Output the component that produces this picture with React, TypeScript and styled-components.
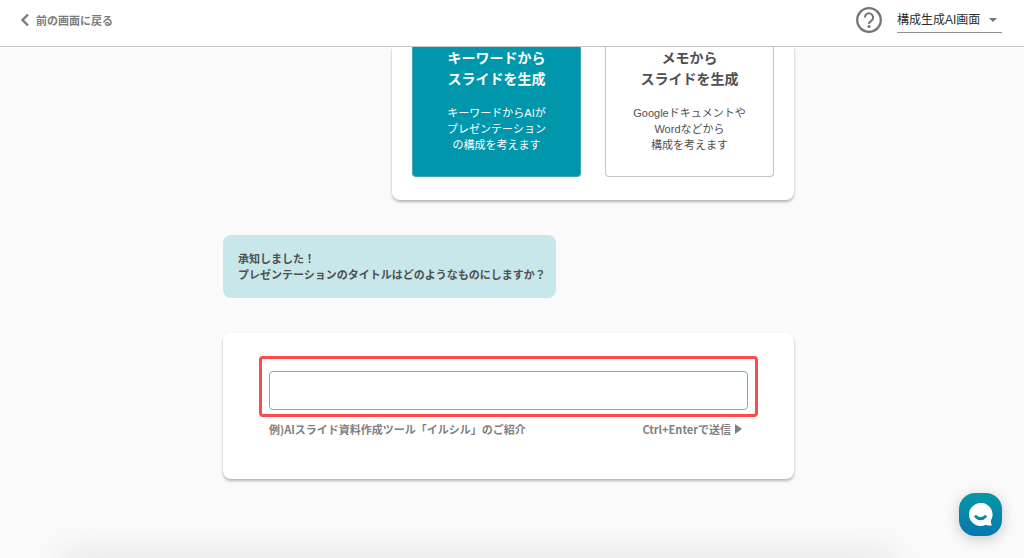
import React from "react";
import styled, { createGlobalStyle } from "styled-components";

const GlobalStyle = createGlobalStyle`
  *, *::before, *::after { box-sizing: border-box; }
  body {
    margin: 0;
    background: #fafafa;
    color: #505050;
    font-family: "Liberation Sans", "Noto Sans CJK JP", sans-serif;
  }
  button, input, select { font: inherit; color: inherit; }
`;

const Page = styled.div`
  display: flex;
  flex-direction: column;
  min-height: 100vh;
  overflow: hidden;
`;

const Header = styled.header`
  display: flex;
  align-items: center;
  justify-content: space-between;
  height: 47px;
  padding: 0 22px 6px 20px;
  background: #fff;
  border-bottom: 1px solid #c8c8c8;
`;

const BackButton = styled.button`
  display: flex;
  align-items: center;
  gap: 6px;
  padding: 0;
  border: 0;
  background: none;
  color: #7b7b7b;
  font-family: "Noto Sans CJK JP", sans-serif;
  font-size: 11px;
  font-weight: 700;
  line-height: 16px;
`;

const HeaderTools = styled.div`
  display: flex;
  align-items: center;
  gap: 14px;
`;

const HelpButton = styled.button`
  display: flex;
  padding: 0;
  border: 0;
  background: none;
  color: #757575;
`;

const SelectBox = styled.div`
  display: flex;
  align-items: center;
  width: 105px;
  border-bottom: 1px solid #919191;
`;

const ScreenSelect = styled.select`
  flex: 1;
  min-width: 0;
  height: 25px;
  padding: 0;
  border: 0;
  background: none;
  appearance: none;
  color: #2b2b2b;
  font-size: 12px;
`;

const SelectArrow = styled.svg`
  flex: none;
  margin-right: 5px;
  pointer-events: none;
`;

const Main = styled.main`
  display: flex;
  flex-direction: column;
  flex: 1;
  width: 100%;
  max-width: 578px;
  margin: 0 auto;
  padding: 0 7px 78px 0;
`;

const Card = styled.section`
  background: #fff;
  border-radius: 8px;
  box-shadow: 0 2px 3px rgba(0, 0, 0, 0.28);
`;

const OptionsCard = styled(Card)`
  display: flex;
  gap: 24px;
  align-self: flex-end;
  padding: 0 20px 23px;
  border-radius: 0 0 8px 8px;
`;

const Option = styled.button<{ $selected?: boolean }>`
  display: flex;
  flex-direction: column;
  gap: 15px;
  align-items: center;
  width: 169px;
  padding: 1px 0 23px;
  border: 1px solid ${(p) => (p.$selected ? "#4aa3b3" : "#c4c4c4")};
  border-top: 0;
  border-radius: 0 0 4px 4px;
  background: ${(p) => (p.$selected ? "#0097ad" : "#fff")};
  color: ${(p) => (p.$selected ? "#fff" : "#505050")};
`;

const OptionTitle = styled.span`
  font-size: 14px;
  font-weight: 700;
  line-height: 21px;
`;

const OptionText = styled.span`
  font-size: 11px;
  line-height: 16px;
`;

const Bubble = styled.p`
  align-self: flex-start;
  margin: 35px 0;
  padding: 16px 10px 15px 15px;
  border-radius: 8px;
  background: #c8e7ea;
  font-size: 11px;
  font-weight: 700;
  line-height: 16px;
`;

const TitleCard = styled(Card)`
  padding: 23px 36px 42px;
`;

const FieldFrame = styled.div`
  padding: 12px 7px 4px;
  border: 3px solid #fb4b4a;
  border-radius: 4px;
`;

const TitleInput = styled.input`
  display: block;
  width: 100%;
  height: 39px;
  padding: 0 12px;
  border: 1px solid #53bccb;
  border-radius: 4px;
  outline: 0;
  background: #fff;
  font-size: 14px;
`;

const FieldNotes = styled.div`
  display: flex;
  align-items: center;
  justify-content: space-between;
  padding: 4px 16px 0 10px;
  color: #7f7f7f;
  font-family: "Noto Sans CJK JP", sans-serif;
  font-size: 11px;
  font-weight: 700;
  line-height: 16px;
`;

const SendButton = styled.button`
  display: flex;
  align-items: center;
  gap: 4px;
  padding: 0;
  border: 0;
  background: none;
`;

const ChatButton = styled.button`
  position: fixed;
  right: 22px;
  bottom: 22px;
  display: flex;
  align-items: center;
  justify-content: center;
  width: 43px;
  height: 43px;
  padding: 0;
  border: 0;
  border-radius: 16px;
  background: linear-gradient(#0697a6, #0677ae);
  box-shadow: 0 3px 14px rgba(0, 0, 0, 0.2);
`;

const BottomShade = styled.div`
  position: fixed;
  left: 60px;
  right: 130px;
  bottom: -12px;
  height: 10px;
  box-shadow: 0 0 36px rgba(0, 0, 0, 0.24);
`;

export default function App() {
  return (
    <Page>
      <GlobalStyle />
      <Header>
        <BackButton type="button">
          <svg width="10" height="14" viewBox="0 0 10 14" fill="none" stroke="currentColor" strokeWidth="2.4" aria-hidden="true">
            <path d="M8 1.500 2.500 7 8 12.500" />
          </svg>
          前の画面に戻る
        </BackButton>
        <HeaderTools>
          <HelpButton type="button" aria-label="ヘルプ">
            <svg width="28" height="28" viewBox="0 0 28 28" fill="none" stroke="currentColor" strokeWidth="2.3" aria-hidden="true">
              <circle cx="14" cy="14" r="11.8" />
              <path d="M9.900 11.500a4.100 4.100 0 1 1 6.900 2.900c-1.700 1.400-2.800 1.900-2.800 3.500" strokeWidth="2" />
              <circle cx="14" cy="20.600" r="1.500" fill="currentColor" stroke="none" />
            </svg>
          </HelpButton>
          <SelectBox>
            <ScreenSelect aria-label="画面" defaultValue="ai">
              <option value="ai">構成生成AI画面</option>
            </ScreenSelect>
            <SelectArrow width="8" height="4" viewBox="0 0 8 4" fill="#757575" aria-hidden="true">
              <path d="M0 0h8L4 4z" />
            </SelectArrow>
          </SelectBox>
        </HeaderTools>
      </Header>
      <Main>
        <OptionsCard>
          <Option type="button" $selected>
            <OptionTitle>
              キーワードから
              <br />
              スライドを生成
            </OptionTitle>
            <OptionText>
              キーワードからAIが
              <br />
              プレゼンテーション
              <br />
              の構成を考えます
            </OptionText>
          </Option>
          <Option type="button">
            <OptionTitle>
              メモから
              <br />
              スライドを生成
            </OptionTitle>
            <OptionText>
              Googleドキュメントや
              <br />
              Wordなどから
              <br />
              構成を考えます
            </OptionText>
          </Option>
        </OptionsCard>
        <Bubble>
          承知しました！
          <br />
          プレゼンテーションのタイトルはどのようなものにしますか？
        </Bubble>
        <TitleCard>
          <FieldFrame>
            <TitleInput type="text" aria-label="プレゼンテーションのタイトル" />
          </FieldFrame>
          <FieldNotes>
            <span>例)AIスライド資料作成ツール「イルシル」のご紹介</span>
            <SendButton type="button">
              Ctrl+Enterで送信
              <svg width="7" height="10" viewBox="0 0 7 10" fill="currentColor" aria-hidden="true">
                <path d="M0 0 7 5 0 10z" />
              </svg>
            </SendButton>
          </FieldNotes>
        </TitleCard>
      </Main>
      <BottomShade />
      <ChatButton type="button" aria-label="チャット">
        <svg width="25" height="25" viewBox="0 0 25 25" fill="none" aria-hidden="true">
          <path d="M12.500 1a11.500 11.500 0 1 0 5.300 21.700c1.800.8 3.900 1 6.200.8-.9-1.500-1.200-2.900-1.100-5.100A11.500 11.500 0 0 0 12.500 1z" fill="#fff" />
          <path d="M7.800 14.500c2.600 2.900 6.900 2.900 9.500 0" stroke="#0688a9" strokeWidth="3" strokeLinecap="round" />
        </svg>
      </ChatButton>
    </Page>
  );
}
